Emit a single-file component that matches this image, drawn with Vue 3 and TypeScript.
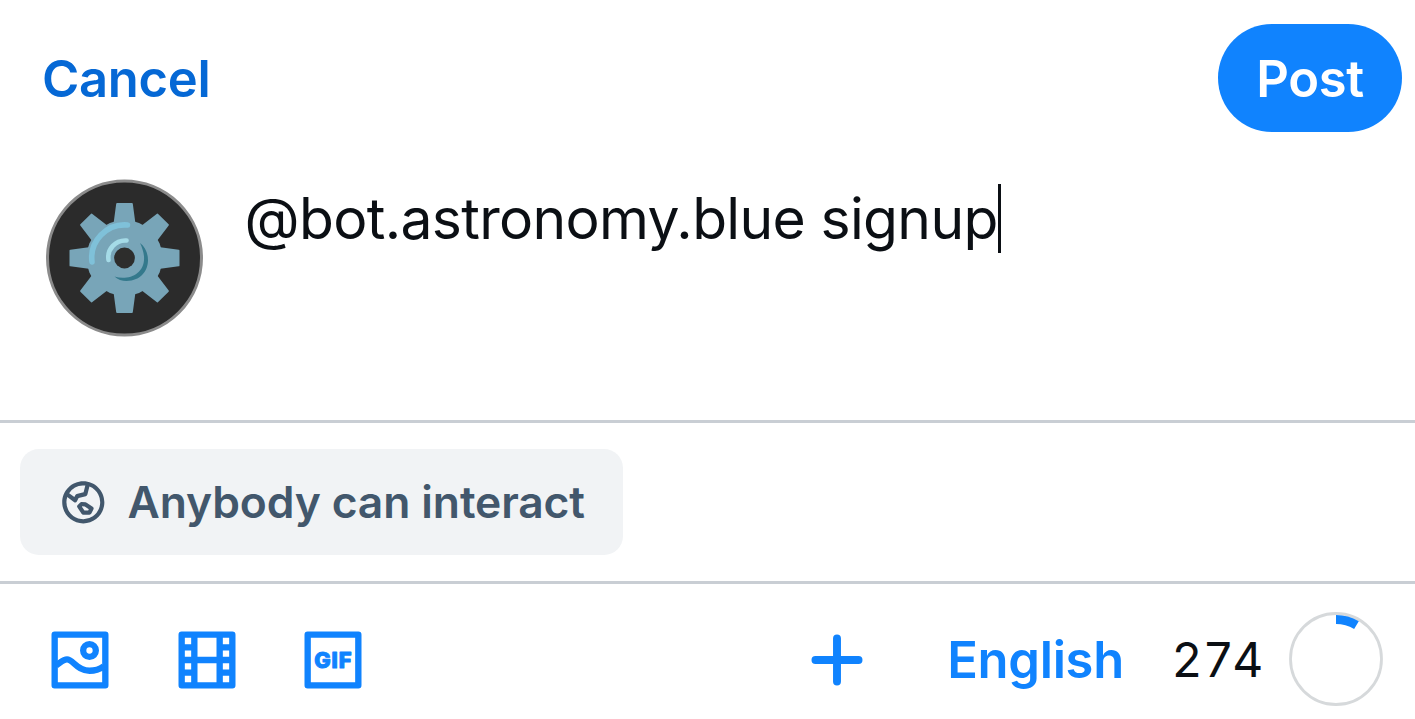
<script setup lang="ts">
import { computed, ref } from 'vue'

const draft = ref('@bot.astronomy.blue signup')
const limit = 300
const remaining = computed(() => limit - draft.value.length)
const teeth = [0, 45, 90, 135, 180, 225, 270, 315]

// Ring segment showing how much of the limit is used
const wedge = computed(() => {
  const a = (draft.value.length / limit) * Math.PI * 2
  const c = 47
  const ro = 44
  const ri = 35
  const at = (r: number) => `${c + r * Math.sin(a)} ${c - r * Math.cos(a)}`
  return `M${c} ${c - ro}A${ro} ${ro} 0 0 1 ${at(ro)}L${at(ri)}A${ri} ${ri} 0 0 0 ${c} ${c - ri}Z`
})
</script>

<template>
  <div class="composer">
    <header class="top">
      <button class="cancel">Cancel</button>
      <button class="post"><span>Post</span></button>
    </header>

    <main class="editor">
      <svg class="avatar" viewBox="-78.5 -79 157 158">
        <circle r="77" fill="#2b2b2b" stroke="#8b8b8b" stroke-width="3" />
        <g fill="#78a5b8">
          <circle r="38" />
          <path v-for="t in teeth" :key="t" :transform="`rotate(${t})`" d="M-11-34-8.3-54.2Q-8.2-55-7.4-55H7.4Q8.2-55 8.3-54.2L11-34Z" />
        </g>
        <path d="M-32.5 4A33 33 0 0 1 3-33" fill="none" stroke="#7fc1d9" stroke-width="5.6" stroke-linecap="round" />
        <path d="M-16 2A17 17 0 0 1 2-17.5" fill="none" stroke="#a5dbe7" stroke-width="4.6" stroke-linecap="round" />
        <path d="M15.5-15C29-5 26 23 2 23Q-5 23-10 18.5C6 24 29 13 15.5-15Z" fill="#34798c" />
        <circle r="10.4" fill="#2d2d2c" />
      </svg>
      <div class="input"><span class="draft">{{ draft }}</span><i class="caret"></i></div>
    </main>

    <section class="audience">
      <button class="chip">
        <svg class="globe" viewBox="0 0 24 24" fill="currentColor">
          <path fill-rule="evenodd" d="M4.4 9.493C4.14 10.28 4 11.124 4 12a8 8 0 1 0 10.899-7.459l-.953 3.81a1 1 0 0 1-.726.727l-3.444.866-.772 1.533a1 1 0 0 1-1.493.35L4.4 9.493Zm.883-1.84L7.756 9.51l.44-.874a1 1 0 0 1 .649-.52l3.306-.832.807-3.227a7.993 7.993 0 0 0-7.676 3.597ZM2 12C2 6.477 6.477 2 12 2s10 4.477 10 10-4.477 10-10 10S2 17.523 2 12Zm8.43.162a1 1 0 0 1 .77-.29l1.89.121a1 1 0 0 1 .494.168l2.869 1.928a1 1 0 0 1 .336 1.277l-.973 1.946a1 1 0 0 1-.894.553h-2.92a1 1 0 0 1-.831-.445L9.225 14.5a1 1 0 0 1 .126-1.262l1.08-1.076Zm.915 1.913.177-.177 1.171.074 1.914 1.286-.303.607h-1.766l-1.194-1.79Z" />
        </svg>
        <span>Anybody can interact</span>
      </button>
    </section>

    <footer class="tools">
      <svg class="tool" viewBox="0 0 24 24" fill="currentColor">
        <path fill-rule="evenodd" d="M3 4a1 1 0 0 1 1-1h16a1 1 0 0 1 1 1v16a1 1 0 0 1-1 1H4a1 1 0 0 1-1-1V4Zm2 1v14h14V5H5Z" />
        <path d="M4.5 13.7C6 12.7 6.7 11.8 7.9 11.8C9.8 11.8 11 15.4 15 15.4C17 15.4 18.5 14.7 19.5 14" fill="none" stroke="currentColor" stroke-width="2" />
        <circle cx="15" cy="9" r="2" fill="none" stroke="currentColor" stroke-width="2" />
      </svg>
      <svg class="tool" viewBox="0 0 24 24" fill="currentColor">
        <path fill-rule="evenodd" d="M3 4a1 1 0 0 1 1-1h16a1 1 0 0 1 1 1v16a1 1 0 0 1-1 1H4a1 1 0 0 1-1-1V4Zm2 1v2h2V5H5Zm4 0v6h6V5H9Zm8 0v2h2V5h-2Zm2 4h-2v2h2V9Zm0 4h-2v2h2v-2Zm0 4h-2v2h2v-2Zm-4 2v-6H9v6h6Zm-8 0v-2H5v2h2Zm-2-4h2v-2H5v2Zm0-4h2V9H5v2Z" />
      </svg>
      <svg class="tool" viewBox="0 0 24 24" fill="currentColor">
        <path fill-rule="evenodd" d="M3 4a1 1 0 0 1 1-1h16a1 1 0 0 1 1 1v16a1 1 0 0 1-1 1H4a1 1 0 0 1-1-1V4Zm2 1v14h14V5H5Z" />
        <text class="gif" x="12.1" y="14.4" text-anchor="middle">GIF</text>
      </svg>
      <svg class="tool plus" viewBox="0 0 24 24" fill="none" stroke="currentColor" stroke-width="2.5" stroke-linecap="round">
        <path d="M12 5.2v13.6M5.2 12h13.6" />
      </svg>
      <button class="language">English</button>
      <span class="count">{{ remaining }}</span>
      <svg class="ring" viewBox="0 0 94 94">
        <circle cx="47" cy="47" r="45.5" fill="none" stroke="#d6d9db" stroke-width="2.8" />
        <path :d="wedge" fill="#1083fe" />
      </svg>
    </footer>
  </div>
</template>

<style>
body {
  background: #fff;
  overflow: hidden;
}
</style>

<style scoped>
.composer {
  box-sizing: border-box;
  width: 1415px;
  height: 719px;
  display: flex;
  flex-direction: column;
  background: #fff;
  font-family: Inter, "Liberation Sans", sans-serif;
  color: #0b0f14;
  white-space: nowrap;
}
button {
  border: 0;
  padding: 0;
  background: none;
  font: inherit;
  color: inherit;
}
.top {
  display: flex;
  justify-content: space-between;
  align-items: center;
  height: 108px;
  padding: 24px 13px 0 42px;
}
.cancel {
  color: #0568d5;
  font-size: 50.7px;
  font-weight: 600;
  letter-spacing: -0.3px;
}
.post {
  width: 184px;
  height: 108px;
  border-radius: 54px;
  background: #1083fe;
  color: #fff;
  font-size: 50.7px;
  font-weight: 600;
  letter-spacing: -0.3px;
}
.editor {
  box-sizing: border-box;
  display: flex;
  align-items: flex-start;
  height: 288px;
  padding: 47px 0 0 46px;
}
.avatar {
  width: 157px;
  height: 158px;
  flex: none;
}
.input {
  display: flex;
  align-items: center;
  height: 69px;
  margin: 5px 0 0 41.5px;
  font-size: 57px;
  letter-spacing: -0.66px;
}
.draft {
  margin-top: -1px;
}
.caret {
  width: 3px;
  height: 69px;
  background: #0b0f14;
}
.audience {
  box-sizing: border-box;
  height: 161px;
  padding: 26px 20px 0;
  border-top: 3px solid #c9ced4;
}
.chip {
  display: flex;
  align-items: center;
  width: 603px;
  height: 106px;
  padding-left: 38px;
  border-radius: 19px;
  background: #f1f3f5;
  color: #42576c;
  font-size: 44.4px;
  font-weight: 600;
  letter-spacing: -0.12px;
}
.globe {
  width: 50.6px;
  height: 50.6px;
  margin-right: 19px;
}
.tools {
  box-sizing: border-box;
  display: flex;
  align-items: center;
  height: 138px;
  padding: 15px 32px 0 42px;
  border-top: 3px solid #c9ced4;
  color: #1083fe;
}
.tool {
  width: 76px;
  height: 76px;
  margin: 1px 50.7px 0 0;
  flex: none;
}
.gif {
  font-size: 6.9px;
  font-weight: 800;
  letter-spacing: 0.3px;
  stroke: currentColor;
  stroke-width: 0.35;
  stroke-linejoin: round;
}
.plus {
  margin: 1px 0 0 376.6px;
}
.language {
  margin-left: 72.5px;
  font-size: 50.7px;
  font-weight: 600;
  letter-spacing: -0.3px;
}
.count {
  padding-top: 1px;
  margin-left: auto;
  margin-right: 22.5px;
  color: #0b0f14;
  font-size: 48px;
  letter-spacing: 3.2px;
}
.ring {
  width: 94px;
  height: 94px;
  flex: none;
}
</style>
